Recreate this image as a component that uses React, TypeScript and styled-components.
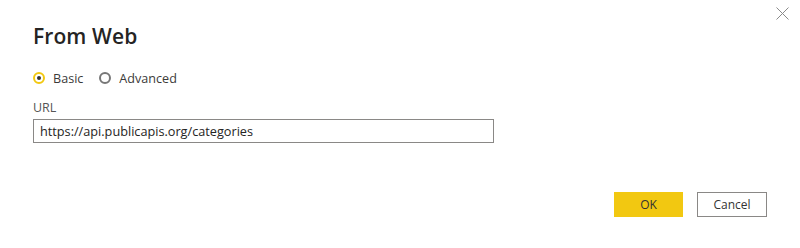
import React from "react";
import styled, { createGlobalStyle } from "styled-components";

const Global = createGlobalStyle`
  html, body { margin: 0; padding: 0; background: #ffffff; }
  body { font-family: "Open Sans", "Noto Sans", sans-serif; }
`;

const Dialog = styled.div`
  position: relative;
  width: 800px;
  height: 248px;
  box-sizing: border-box;
  padding: 22px 33px 0 33px;
  display: flex;
  flex-direction: column;
  background: #fff;
  color: #333;
`;

const Close = styled.button`
  position: absolute;
  top: 5px;
  right: 10px;
  width: 16px;
  height: 16px;
  padding: 0;
  border: none;
  background: transparent;
  display: flex;
  align-items: center;
  justify-content: center;
`;

const Title = styled.h1`
  margin: 0;
  font-size: 21px;
  font-weight: 600;
  color: #252423;
  line-height: 28px;
  letter-spacing: 0.1px;
`;

const RadioRow = styled.div`
  display: flex;
  align-items: center;
  gap: 16px;
  margin-top: 19px;
  height: 18px;
`;

const RadioOption = styled.label`
  display: flex;
  align-items: center;
  gap: 8px;
  font-size: 12.6px;
  color: #3b3a39;
`;

const RadioDot = styled.span<{ $checked?: boolean }>`
  width: 8px;
  height: 8px;
  border-radius: 50%;
  border: 2px solid ${(p) => (p.$checked ? "#f2c811" : "#777")};
  display: flex;
  align-items: center;
  justify-content: center;
  &::after {
    content: "";
    width: 4px;
    height: 4px;
    border-radius: 50%;
    background: ${(p) => (p.$checked ? "#333" : "transparent")};
  }
`;

const FieldLabel = styled.div`
  margin-top: 12px;
  font-size: 12.5px;
  color: #555;
  line-height: 18px;
`;

const Input = styled.div`
  margin-top: 2px;
  width: 461px;
  height: 24px;
  box-sizing: border-box;
  border: 1px solid #8a8886;
  display: flex;
  align-items: center;
  padding-left: 6px;
  font-size: 12.7px;
  color: #252423;
`;

const Footer = styled.div`
  display: flex;
  justify-content: flex-end;
  gap: 14px;
`;

const Button = styled.button<{ $primary?: boolean }>`
  width: ${(p) => (p.$primary ? "69px" : "70px")};
  height: 25px;
  box-sizing: border-box;
  font-family: "Open Sans", "Noto Sans", sans-serif;
  font-size: 12px;
  color: #333;
  background: ${(p) => (p.$primary ? "#f2c811" : "#fff")};
  border: ${(p) => (p.$primary ? "none" : "1px solid #8a8886")};
  padding: 0;
`;

const FooterWrap = styled.div`
  margin-top: 49px;
  display: flex;
  justify-content: flex-end;
  width: 734px;
`;

export default function App() {
  return (
    <>
      <Global />
      <Dialog>
        <Close aria-label="Close">
          <svg width="13" height="13" viewBox="0 0 13 13">
            <path d="M0.5 0.5 L12.5 12.5 M12.5 0.5 L0.5 12.5" stroke="#8a8a8a" strokeWidth="1" />
          </svg>
        </Close>
        <Title>From Web</Title>
        <RadioRow>
          <RadioOption>
            <RadioDot $checked />
            Basic
          </RadioOption>
          <RadioOption>
            <RadioDot />
            Advanced
          </RadioOption>
        </RadioRow>
        <FieldLabel>URL</FieldLabel>
        <Input>https://api.publicapis.org/categories</Input>
        <FooterWrap>
          <Footer>
            <Button $primary>OK</Button>
            <Button>Cancel</Button>
          </Footer>
        </FooterWrap>
      </Dialog>
    </>
  );
}
